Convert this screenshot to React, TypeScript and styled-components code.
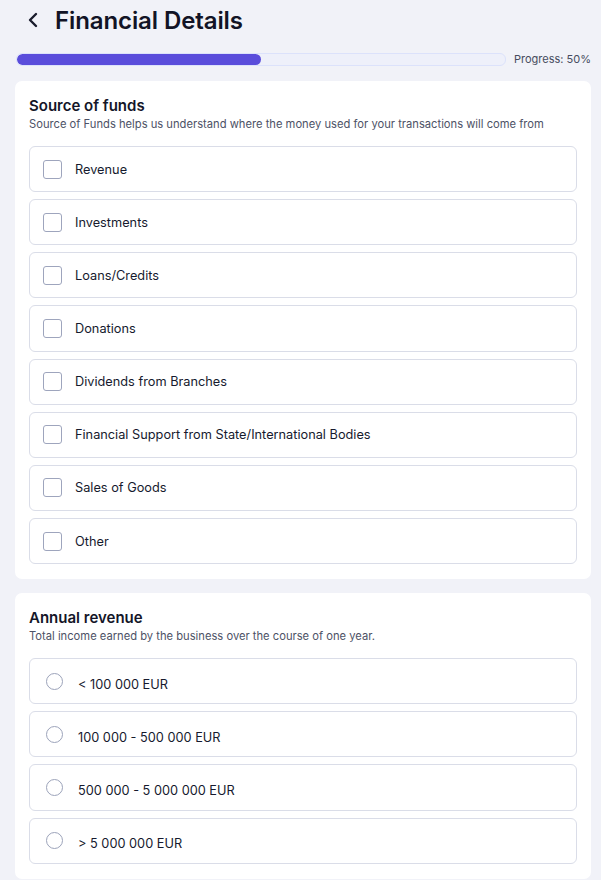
import styled, { createGlobalStyle } from "styled-components";

const GlobalStyle = createGlobalStyle`
  html, body {
    margin: 0;
    padding: 0;
    background: #f1f2f8;
  }
  body {
    font-family: "Inter", "Liberation Sans", sans-serif;
    color: #141628;
  }
`;

const Page = styled.div`
  display: flex;
  flex-direction: column;
  padding: 0 10px 0 15px;
  width: 576px;
`;

const Header = styled.div`
  display: flex;
  align-items: center;
  gap: 15px;
  height: 40px;
  padding-left: 11px;
`;

const BackButton = styled.button`
  display: flex;
  align-items: center;
  justify-content: center;
  border: none;
  background: none;
  padding: 0;
  width: 14px;
  height: 20px;
  cursor: pointer;
`;

const Title = styled.h1`
  margin: 0;
  font-size: 24px;
  font-weight: 600;
  color: #121426;
  letter-spacing: -0.1px;
`;

const ProgressRow = styled.div`
  display: flex;
  align-items: center;
  gap: 8px;
  margin-top: 12px;
  padding-left: 1px;
`;

const ProgressTrack = styled.div`
  flex: 1;
  height: 11px;
  border: 1px solid #dce2fb;
  border-radius: 6px;
  background: #eef0fa;
  overflow: hidden;
`;

const ProgressFill = styled.div`
  height: 100%;
  background: #5a4ddb;
  border-radius: 6px;
`;

const ProgressLabel = styled.span`
  font-size: 11px;
  color: #474c5e;
`;

const Card = styled.section<{ $top: number }>`
  display: flex;
  flex-direction: column;
  background: #ffffff;
  border-radius: 7px;
  padding: 15px 14px 15px;
  margin-top: ${(p) => p.$top}px;
`;

const CardTitle = styled.h2`
  margin: 0;
  font-size: 15px;
  font-weight: 600;
  color: #141628;
  line-height: 20px;
`;

const CardSubtitle = styled.p`
  margin: 0 0 14px;
  font-size: 11.2px;
  color: #4d5266;
  line-height: 16px;
`;

const OptionList = styled.div`
  display: flex;
  flex-direction: column;
  gap: 7px;
`;

const Option = styled.label`
  display: flex;
  align-items: center;
  height: 44.15px;
  border: 1px solid #dadde8;
  border-radius: 6px;
  padding: 0 13px;
  gap: 13px;
  cursor: pointer;
`;

const CheckBox = styled.span`
  width: 17px;
  height: 17px;
  border: 1px solid #9ea5bd;
  border-radius: 3px;
  flex-shrink: 0;
`;

const RadioCircle = styled.span`
  width: 15px;
  height: 15px;
  border: 1px solid #9ca3ba;
  border-radius: 50%;
  flex-shrink: 0;
  margin: 0 2px 0 3px;
`;

const OptionText = styled.span<{ $radio?: boolean }>`
  font-size: 12.75px;
  color: #161a2e;
  padding-top: ${(p) => (p.$radio ? "6px" : "0")};
`;

const sources = [
  "Revenue",
  "Investments",
  "Loans/Credits",
  "Donations",
  "Dividends from Branches",
  "Financial Support from State/International Bodies",
  "Sales of Goods",
  "Other",
];

const revenues = [
  "< 100 000 EUR",
  "100 000 - 500 000 EUR",
  "500 000 - 5 000 000 EUR",
  "> 5 000 000 EUR",
];

const progress = 50;

const App = () => {
  return (
    <>
      <GlobalStyle />
      <Page>
        <Header>
          <BackButton aria-label="Back">
            <svg width="12" height="16" viewBox="0 0 12 16" fill="none">
              <path
                d="M9 2 L3 8 L9 14"
                stroke="#1a1c2c"
                strokeWidth="2.4"
                strokeLinecap="round"
                strokeLinejoin="round"
              />
            </svg>
          </BackButton>
          <Title>Financial Details</Title>
        </Header>
        <ProgressRow>
          <ProgressTrack>
            <ProgressFill style={{ width: `${progress}%` }} />
          </ProgressTrack>
          <ProgressLabel>Progress: {progress}%</ProgressLabel>
        </ProgressRow>

        <Card $top={15}>
          <CardTitle>Source of funds</CardTitle>
          <CardSubtitle>
            Source of Funds helps us understand where the money used for your
            transactions will come from
          </CardSubtitle>
          <OptionList>
            {sources.map((s) => (
              <Option key={s}>
                <CheckBox />
                <OptionText>{s}</OptionText>
              </Option>
            ))}
          </OptionList>
        </Card>

        <Card $top={14}>
          <CardTitle>Annual revenue</CardTitle>
          <CardSubtitle>
            Total income earned by the business over the course of one year.
          </CardSubtitle>
          <OptionList>
            {revenues.map((r) => (
              <Option key={r}>
                <RadioCircle />
                <OptionText $radio>{r}</OptionText>
              </Option>
            ))}
          </OptionList>
        </Card>
      </Page>
    </>
  );
};

export default App;
